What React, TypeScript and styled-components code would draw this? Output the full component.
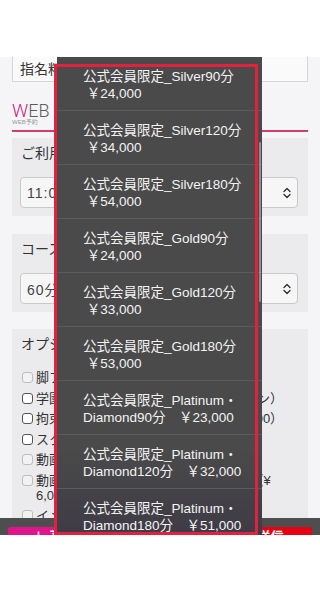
import React from "react";
import styled, { createGlobalStyle } from "styled-components";

const GlobalStyle = createGlobalStyle`
  html, body {
    margin: 0;
    padding: 0;
    background: #ffffff;
  }
  body {
    font-family: "Liberation Sans", "Noto Sans CJK JP", sans-serif;
  }
  * {
    box-sizing: border-box;
  }
`;

const Canvas = styled.div`
  width: 320px;
  height: 596px;
  padding-top: 57px;
  background: #ffffff;
`;

const Screen = styled.div`
  position: relative;
  width: 320px;
  height: 478px;
  overflow: hidden;
  background: #f5f5f7;
`;

const Page = styled.div`
  display: flex;
  flex-direction: column;
  padding: 0 12px;
`;

const NameField = styled.div`
  height: 33px;
  margin-top: -8px;
  padding: 5px 7px 0;
  display: flex;
  align-items: center;
  background: #fafafa;
  border: 1px solid #d6d6d6;
  font-size: 14px;
  color: #333333;
  white-space: nowrap;
  overflow: hidden;
`;

const Heading = styled.h2`
  margin: 20px 0 0;
  font-family: Roboto, "Liberation Sans", sans-serif;
  font-weight: 300;
  font-size: 18px;
  line-height: 17px;
  color: #5c5c5c;

  span {
    color: #c8177a;
  }
`;

const HeadingSub = styled.div`
  font-size: 6px;
  line-height: 6px;
  color: #9a9a9a;
`;

const Rule = styled.div`
  height: 2px;
  margin-top: 5px;
  background: #cf3e6d;
`;

const Card = styled.section<{ $gap: number }>`
  margin-top: ${(p) => p.$gap}px;
  padding: 6px 10px 8px 8px;
  background: #ebebed;
`;

const FieldLabel = styled.div`
  margin-bottom: 15px;
  padding-left: 1px;
  font-size: 14px;
  line-height: 18px;
  color: #333333;
`;

const SelectBox = styled.div`
  height: 31px;
  display: flex;
  align-items: center;
  justify-content: space-between;
  padding: 0 5px 0 6px;
  background: #f6f6f6;
  border: 1px solid #c9c9c9;
  border-radius: 4px;
  font-size: 14px;
  letter-spacing: 1px;
  color: #444444;
`;

const OptionList = styled.ul`
  list-style: none;
  margin: 17px 0 0;
  padding: 0 0 0 2px;
  display: flex;
  flex-direction: column;
  gap: 5.5px;
`;

const OptionRow = styled.li`
  display: flex;
  align-items: flex-start;
  gap: 3px;
  font-size: 13px;
  line-height: 15px;
  color: #333333;
  white-space: nowrap;
`;

const Check = styled.span<{ $muted?: boolean }>`
  flex: none;
  width: 11px;
  height: 11px;
  margin-top: 2px;
  border-radius: 3px;
  border: 1px solid ${(p) => (p.$muted ? "#bdbdbd" : "#555555")};
  background: ${(p) => (p.$muted ? "#f2f2f2" : "#ffffff")};
`;

const Footer = styled.div`
  position: absolute;
  left: 0;
  right: 0;
  bottom: 0;
  height: 17px;
  display: flex;
  gap: 8px;
  padding: 9px 8px 0;
  background: #4e4e4e;
`;

const FooterButton = styled.div<{ $tone: string }>`
  flex: 1;
  height: 40px;
  flex-shrink: 0;
  padding: 2px 24px 0;
  border-radius: 3px;
  background: ${(p) => p.$tone};
  color: #ffffff;
  font-size: 13px;
  font-weight: 700;
  line-height: 15px;
  text-align: ${(p) => (p.$tone === "#e50012" ? "center" : "left")};
`;

const Picker = styled.div`
  position: absolute;
  left: 57px;
  top: 0;
  width: 205px;
  height: 478px;
  overflow: hidden;
  background: linear-gradient(180deg, #4a4a4a 0%, #4a4a4a 82%, #3e3b45 100%);
`;

const PickerItem = styled.div`
  padding: 11px 6px 8px 26px;
  border-bottom: 1px solid #5c5c5c;
  font-size: 13.5px;
  line-height: 17px;
  color: #f3f3f3;
  white-space: nowrap;
`;

const ScrollThumb = styled.div`
  position: absolute;
  left: 202px;
  top: 85px;
  width: 2px;
  height: 160px;
  border-radius: 1px;
  background: rgba(210, 210, 210, 0.5);
`;

const Highlight = styled.div`
  position: absolute;
  left: 54px;
  top: 7px;
  width: 204px;
  height: 471px;
  border: 3px solid #e4203f;
  pointer-events: none;
`;

const Chevrons = () => (
  <svg width="10" height="12" viewBox="0 0 10 12">
    <path
      d="M2 4.6 L5 1.6 L8 4.6 M2 7.4 L5 10.4 L8 7.4"
      fill="none"
      stroke="#333"
      strokeWidth="1.4"
      strokeLinecap="round"
      strokeLinejoin="round"
    />
  </svg>
);

const courses: [string, string][] = [
  ["公式会員限定_Silver90分", "\u00a0￥24,000"],
  ["公式会員限定_Silver120分", "\u00a0￥34,000"],
  ["公式会員限定_Silver180分", "\u00a0￥54,000"],
  ["公式会員限定_Gold90分", "\u00a0￥24,000"],
  ["公式会員限定_Gold120分", "\u00a0￥33,000"],
  ["公式会員限定_Gold180分", "\u00a0￥53,000"],
  ["公式会員限定_Platinum・", "Diamond90分　￥23,000"],
  ["公式会員限定_Platinum・", "Diamond120分　￥32,000"],
  ["公式会員限定_Platinum・", "Diamond180分　￥51,000"],
];

const options: { lines: string[]; muted?: boolean }[] = [
  { lines: ["脚フェチ（ニーハイ着用）"], muted: true },
  { lines: ["学園プレイ（制服・体操服のオプション）"] },
  { lines: ["拘束プレイ（手錠・アイマスク　¥3,000）"] },
  { lines: ["スクール水着"] },
  { lines: ["動画撮影（顔出しNG）"], muted: true },
  { lines: ["動画撮影（撮影データお持ち帰り可）（¥", "6,000）"], muted: true },
  { lines: ["イメージプレイ"], muted: true },
];

const App = () => {
  return (
    <Canvas>
      <GlobalStyle />
      <Screen>
        <Page>
          <NameField>指名料（¥2,000）</NameField>
          <Heading>
            <span>W</span>EB RESERVE
          </Heading>
          <HeadingSub>WEB予約</HeadingSub>
          <Rule />

          <Card $gap={6}>
            <FieldLabel>ご利用日時</FieldLabel>
            <SelectBox>
              <span>11:00</span>
              <Chevrons />
            </SelectBox>
          </Card>

          <Card $gap={18}>
            <FieldLabel>コース</FieldLabel>
            <SelectBox>
              <span>60分</span>
              <Chevrons />
            </SelectBox>
          </Card>

          <Card $gap={17}>
            <FieldLabel>オプション</FieldLabel>
            <OptionList>
              {options.map((o, i) => (
                <OptionRow key={i}>
                  <Check $muted={o.muted} />
                  <span>
                    {o.lines.map((l, j) => (
                      <React.Fragment key={j}>
                        {j > 0 && <br />}
                        {l}
                      </React.Fragment>
                    ))}
                  </span>
                </OptionRow>
              ))}
            </OptionList>
          </Card>
        </Page>

        <Footer>
          <FooterButton $tone="#e0158c">＋ 予約する</FooterButton>
          <FooterButton $tone="#e50012">予約内容を送信</FooterButton>
        </Footer>

        <Picker>
          {courses.map(([a, b], i) => (
            <PickerItem key={i}>
              {a}
              <br />
              {b}
            </PickerItem>
          ))}
          <ScrollThumb />
        </Picker>
        <Highlight />
      </Screen>
    </Canvas>
  );
};

export default App;
